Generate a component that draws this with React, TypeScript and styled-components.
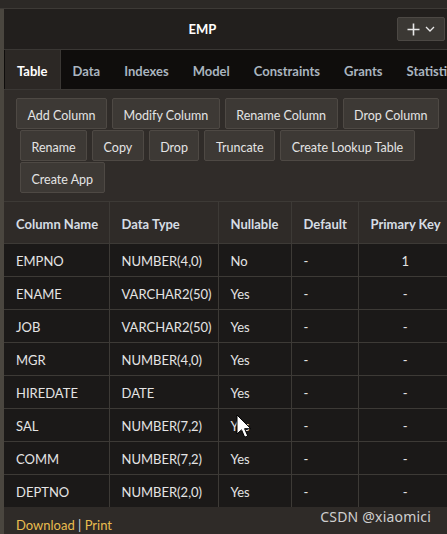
import React from "react";
import styled, { createGlobalStyle } from "styled-components";

const GlobalStyle = createGlobalStyle`
  html, body {
    margin: 0;
    padding: 0;
    background: #2c2926;
    font-family: Lato, "Noto Sans", sans-serif;
    font-size: 13px;
    color: #e6e6e6;
  }
`;

const Page = styled.div`
  position: relative;
  width: 447px;
  height: 534px;
  display: flex;
  flex-direction: column;
  overflow: hidden;
`;

const TopStrip = styled.div`
  height: 8px;
  background: #2c2926;
  border-bottom: 1px solid #3d3a36;
`;

const Body = styled.div`
  flex: 1;
  display: flex;
  min-height: 0;
`;

const LeftRail = styled.div`
  width: 4px;
  background: #4a463f;
`;

const Panel = styled.div`
  flex: 1;
  min-width: 0;
  display: flex;
  flex-direction: column;
  overflow: hidden;
`;

const TitleBar = styled.div`
  height: 40px;
  background: #221f1d;
  border-bottom: 1px solid #3a3734;
  display: flex;
  align-items: center;
  padding-right: 2px;
`;

const Title = styled.div`
  flex: 1;
  text-align: center;
  font-weight: 700;
  font-size: 13px;
  color: #ffffff;
  padding-left: 4px;
`;

const MenuButton = styled.button`
  width: 48px;
  height: 24px;
  background: #3b3834;
  border: 1px solid #4c4844;
  border-radius: 2px;
  display: flex;
  align-items: center;
  justify-content: center;
  gap: 5px;
  padding: 0;
  color: #e8e8e8;
`;

const Tabs = styled.div`
  height: 39px;
  background: #0f0d0c;
  border-bottom: 1px solid #3a3734;
  display: flex;
  padding-left: 1px;
  white-space: nowrap;
`;

const Tab = styled.div<{ $active?: boolean }>`
  padding: 3px 12px 0;
  line-height: 36px;
  font-weight: 700;
  font-size: 13px;
  color: ${(p) => (p.$active ? "#ffffff" : "#a9b4bf")};
  background: ${(p) => (p.$active ? "#2c2825" : "transparent")};
  border-right: ${(p) => (p.$active ? "1px solid #3a3734" : "none")};
`;

const Toolbar = styled.div`
  background: #302c29;
  padding: 8px 4px 8px 16px;
  display: flex;
  flex-wrap: wrap;
  gap: 1px 5px;
  border-bottom: 1px solid #3d3a36;
`;

const ToolButton = styled.button`
  height: 31px;
  padding: 3px 10.5px 0;
  background: #3d3935;
  border: 1px solid #4e4944;
  border-radius: 2px;
  color: #e4e4e4;
  font-family: inherit;
  font-size: 12.5px;
  white-space: nowrap;

  &:first-child {
    margin-left: -4px;
  }
`;

const Grid = styled.table`
  table-layout: fixed;
  border-collapse: collapse;
  width: 448px;
`;

const HeadCell = styled.th<{ $w: number }>`
  box-sizing: border-box;
  width: ${(p) => p.$w}px;
  height: 41px;
  padding: 3px 12px 0;
  background: #2f2b28;
  border-left: 1px solid #3d3a36;
  border-bottom: 1px solid #3d3a36;
  text-align: left;
  font-weight: 700;
  font-size: 13px;
  color: #d6dde4;
  white-space: nowrap;

  &:first-child {
    border-left: none;
  }
`;

const Cell = styled.td<{ $center?: boolean }>`
  box-sizing: border-box;
  height: 33px;
  padding: 3px 12px 0;
  background: #1b1918;
  border-left: 1px solid #3d3a36;
  border-bottom: 1px solid #3d3a36;
  text-align: ${(p) => (p.$center ? "center" : "left")};
  font-size: 13px;
  color: #e4e4e4;
  white-space: nowrap;

  &:first-child {
    border-left: none;
  }
`;

const LastRow = styled.tr`
  td {
    border-bottom: none;
  }
`;

const Footer = styled.div`
  flex: 1;
  background: #2f2b28;
  padding: 10px 12px 0;
  font-size: 13px;
  color: #d8d8d8;
`;

const Link = styled.span`
  color: #e9bd4f;
`;

const Watermark = styled.div`
  position: absolute;
  right: 16px;
  bottom: 8px;
  font-family: "Noto Sans", sans-serif;
  font-size: 14px;
  color: #cfcfcf;
  letter-spacing: 0.2px;
`;

const Cursor = styled.svg`
  position: absolute;
  left: 236px;
  top: 414px;
`;

const columns = [
  { name: "Column Name", w: 105 },
  { name: "Data Type", w: 109 },
  { name: "Nullable", w: 73 },
  { name: "Default", w: 67 },
  { name: "Primary Key", w: 94 },
];

const rows = [
  ["EMPNO", "NUMBER(4,0)", "No", "-", "1"],
  ["ENAME", "VARCHAR2(50)", "Yes", "-", "-"],
  ["JOB", "VARCHAR2(50)", "Yes", "-", "-"],
  ["MGR", "NUMBER(4,0)", "Yes", "-", "-"],
  ["HIREDATE", "DATE", "Yes", "-", "-"],
  ["SAL", "NUMBER(7,2)", "Yes", "-", "-"],
  ["COMM", "NUMBER(7,2)", "Yes", "-", "-"],
  ["DEPTNO", "NUMBER(2,0)", "Yes", "-", "-"],
];

const tabs = ["Table", "Data", "Indexes", "Model", "Constraints", "Grants", "Statistics"];

const actions = [
  "Add Column",
  "Modify Column",
  "Rename Column",
  "Drop Column",
  "Rename",
  "Copy",
  "Drop",
  "Truncate",
  "Create Lookup Table",
  "Create App",
];

const App: React.FC = () => {
  return (
    <Page>
      <GlobalStyle />
      <TopStrip />
      <Body>
        <LeftRail />
        <Panel>
          <TitleBar>
            <Title>EMP</Title>
            <MenuButton>
              <svg width="13" height="13" viewBox="0 0 13 13">
                <path d="M6.5 0.5v12M0.5 6.5h12" stroke="#e8e8e8" strokeWidth="1.6" />
              </svg>
              <svg width="10" height="6" viewBox="0 0 10 6">
                <path d="M1 1l4 4 4-4" stroke="#e8e8e8" strokeWidth="1.3" fill="none" />
              </svg>
            </MenuButton>
          </TitleBar>
          <Tabs>
            {tabs.map((t, i) => (
              <Tab key={t} $active={i === 0}>
                {t}
              </Tab>
            ))}
          </Tabs>
          <Toolbar>
            {actions.map((a) => (
              <ToolButton key={a}>{a}</ToolButton>
            ))}
          </Toolbar>
          <Grid>
            <thead>
              <tr>
                {columns.map((c) => (
                  <HeadCell key={c.name} $w={c.w}>
                    {c.name}
                  </HeadCell>
                ))}
              </tr>
            </thead>
            <tbody>
              {rows.map((r, i) => {
                const cells = r.map((v, j) => (
                  <Cell key={j} $center={j === 4}>
                    {v}
                  </Cell>
                ));
                return i === rows.length - 1 ? (
                  <LastRow key={r[0]}>{cells}</LastRow>
                ) : (
                  <tr key={r[0]}>{cells}</tr>
                );
              })}
            </tbody>
          </Grid>
          <Footer>
            <Link>Download</Link> | <Link>Print</Link>
          </Footer>
        </Panel>
      </Body>
      <Watermark>CSDN @xiaomici</Watermark>
      <Cursor width="18" height="26" viewBox="0 0 18 26">
        <path
          d="M1 1v19l4.5-4.2 3.2 7.4 3-1.3-3.1-7.2h6.2z"
          fill="#ffffff"
          stroke="#000000"
          strokeWidth="1"
        />
      </Cursor>
    </Page>
  );
};

export default App;
